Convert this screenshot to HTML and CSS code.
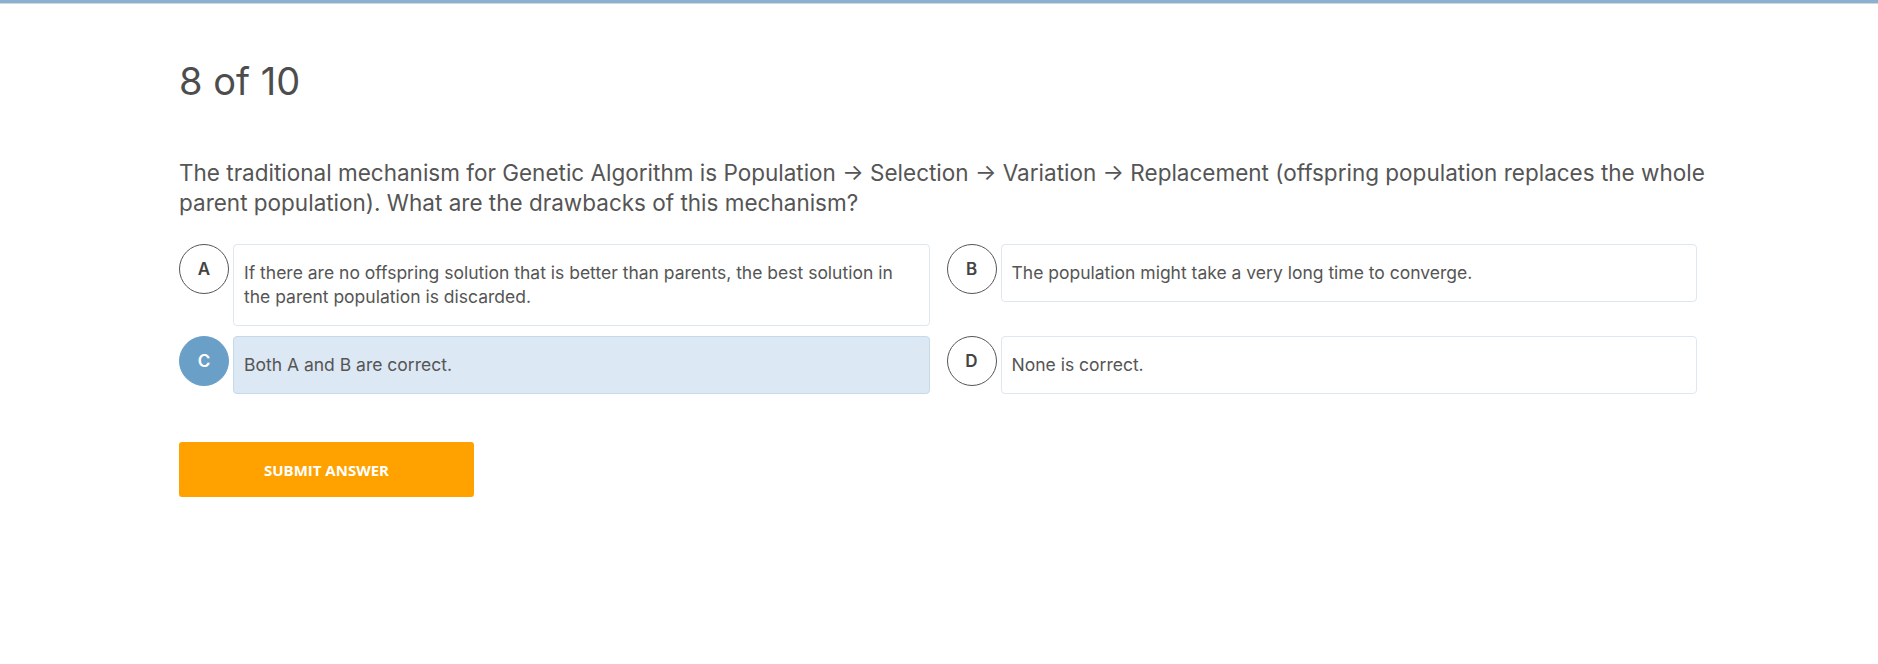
FILE: index.html
```html
<!DOCTYPE html>
<html>
<head>
<meta charset="utf-8">
<link rel="stylesheet" href="styles.css">
</head>
<body>
<div class="topbar"></div>
<main class="quiz">
  <h1 class="counter">8 of 10</h1>
  <p class="question">The traditional mechanism for Genetic Algorithm is Population → Selection → Variation → Replacement (offspring population replaces the whole parent population). What are the drawbacks of this mechanism?</p>
  <div class="options">
    <div class="option">
      <div class="letter">A</div>
      <div class="answer">If there are no offspring solution that is better than parents, the best solution in the parent population is discarded.</div>
    </div>
    <div class="option">
      <div class="letter">B</div>
      <div class="answer">The population might take a very long time to converge.</div>
    </div>
    <div class="option selected">
      <div class="letter">C</div>
      <div class="answer">Both A and B are correct.</div>
    </div>
    <div class="option">
      <div class="letter">D</div>
      <div class="answer">None is correct.</div>
    </div>
  </div>
  <button class="submit">SUBMIT ANSWER</button>
</main>
</body>
</html>
```
FILE: styles.css
```css
html, body {
  margin: 0;
  padding: 0;
  background: #ffffff;
}
body {
  font-family: Inter, "Liberation Sans", sans-serif;
  color: #555555;
}
.topbar {
  height: 3px;
  background: #8ab1d3;
  border-bottom: 1px solid #d6d6d6;
}
.quiz {
  padding: 0 140px 0 179px;
}
.counter {
  margin: 0;
  padding-top: 52px;
  font-size: 38px;
  font-weight: 400;
  line-height: 50px;
  color: #4d4d4d;
}
.question {
  margin: 52px 0 0 0;
  font-size: 22.5px;
  line-height: 30px;
  color: #555555;
}
.options {
  max-width: 1518px;
  margin-top: 26px;
  display: grid;
  grid-template-columns: 1fr 1fr;
  column-gap: 17px;
  row-gap: 10px;
  align-items: start;
}
.option {
  display: flex;
  align-items: flex-start;
  gap: 4px;
}
.letter {
  flex: 0 0 auto;
  width: 48px;
  height: 48px;
  border: 1px solid #555555;
  border-radius: 50%;
  display: flex;
  align-items: center;
  justify-content: center;
  font-size: 17px;
  font-weight: 600;
  color: #444444;
}
.answer {
  flex: 1 1 auto;
  border: 1px solid #dde7f1;
  border-radius: 4px;
  padding: 16px 10px;
  font-size: 17.5px;
  line-height: 24px;
  color: #555555;
}
.selected .letter {
  background: #6aa0c8;
  border-color: #6aa0c8;
  color: #ffffff;
}
.selected .answer {
  background: #dce8f3;
  border-color: #c6d9ea;
}
.submit {
  margin-top: 48px;
  width: 295px;
  height: 55px;
  border: none;
  border-radius: 3px;
  background: #ffa200;
  color: #ffffff;
  font-family: "Open Sans", "Liberation Sans", sans-serif;
  font-weight: 700;
  font-size: 15px;
  cursor: pointer;
}
```
